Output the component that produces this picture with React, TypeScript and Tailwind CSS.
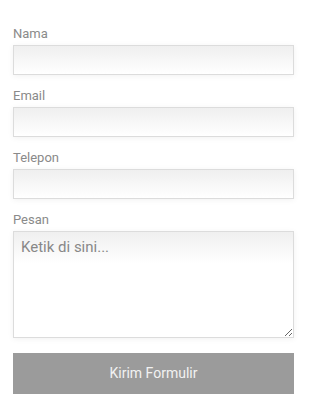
import React from 'react';

const fieldCls =
  'block w-full border border-[#dcdcdc] shadow-[0_1px_6px_rgba(0,0,0,0.06)] outline-none px-[7px] text-[15px] text-[#555] placeholder:text-[#888]';

function Field({ label, type = 'text' }: { label: string; type?: string }) {
  return (
    <div className="mb-[12px]">
      <label className="mb-[2px] block h-[18px] text-[13px] leading-[18px] text-[#8a8a8a]">{label}</label>
      <input type={type} className={`${fieldCls} h-[30px] bg-gradient-to-b from-[#efefef] to-white`} />
    </div>
  );
}

export default function App() {
  return (
    <div className="min-h-[400px] bg-white px-[13px] pt-[25px] pr-[16px]" style={{ fontFamily: 'Roboto, "Liberation Sans", sans-serif' }}>
      <form onSubmit={(e) => e.preventDefault()}>
        <Field label="Nama" />
        <Field label="Email" type="email" />
        <Field label="Telepon" type="tel" />

        <div className="mb-[15px]">
          <label className="mb-[2px] block h-[18px] text-[13px] leading-[18px] text-[#8a8a8a]">Pesan</label>
          <textarea
            placeholder="Ketik di sini..."
            className={`${fieldCls} h-[107px] py-[5px] leading-[20px] bg-[linear-gradient(#efefef,#ffffff_32px)]`}
          />
        </div>

        <button
          type="submit"
          className="block h-[41px] w-full bg-[#9b9b9b] text-[14px] text-[#f2f2f2]"
        >
          Kirim Formulir
        </button>
      </form>
    </div>
  );
}
